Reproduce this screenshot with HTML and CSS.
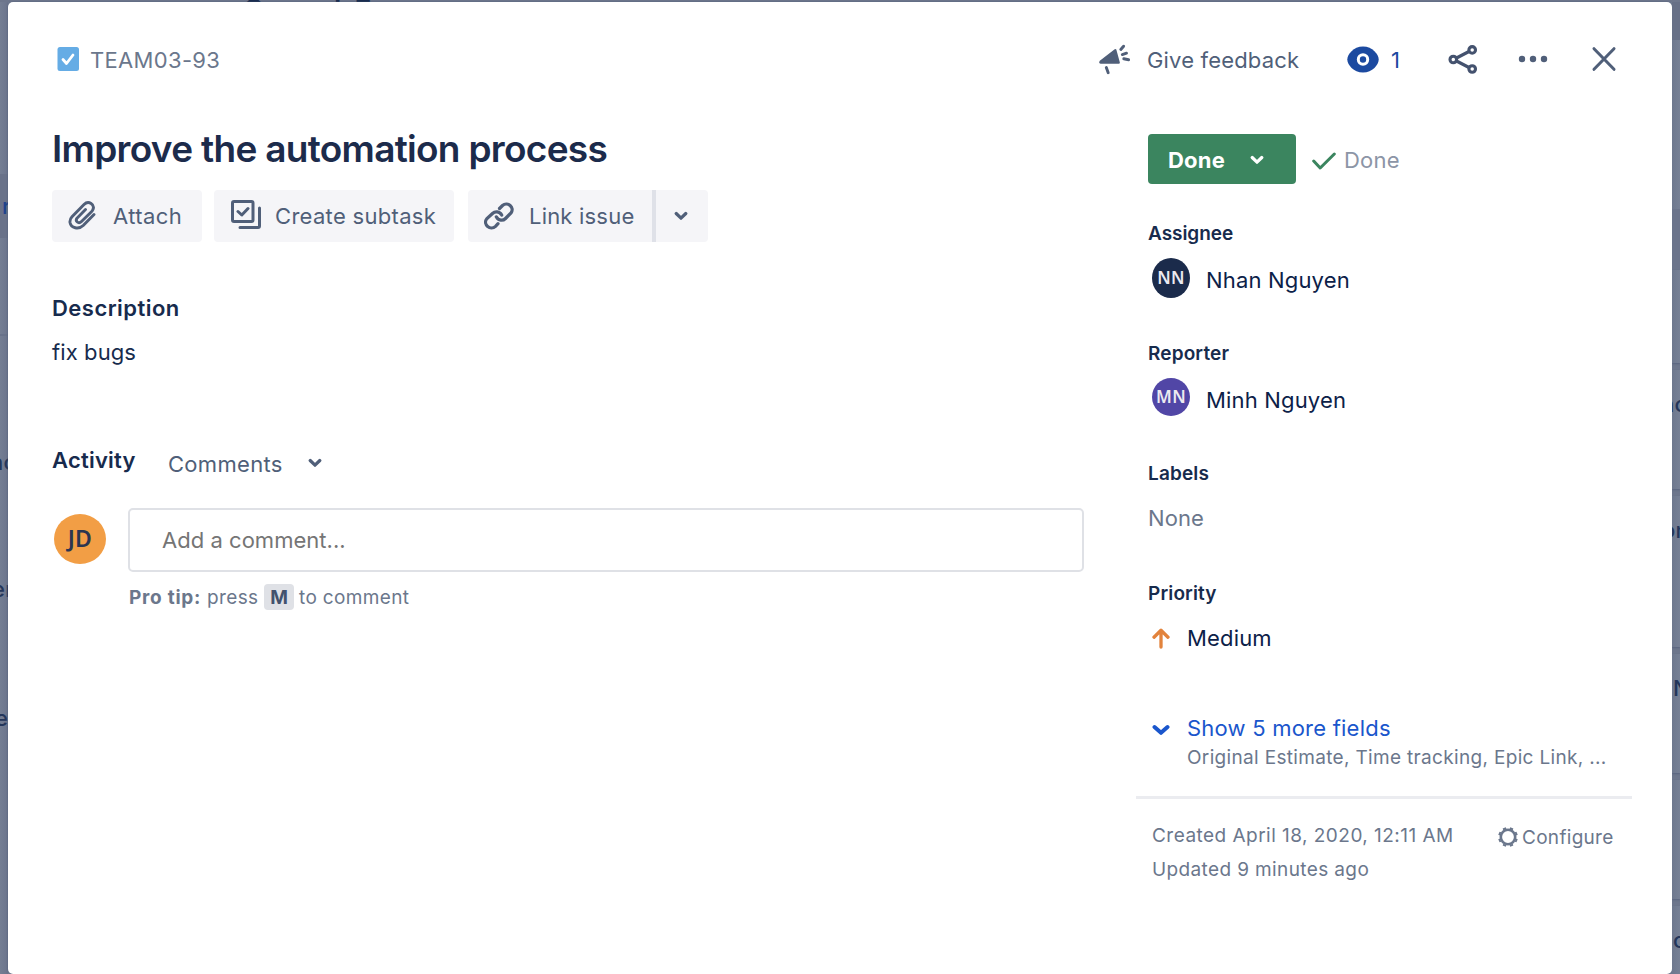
FILE: index.html
```html
<!DOCTYPE html>
<html lang="en">
<head>
<meta charset="utf-8">
<title>TEAM03-93 Improve the automation process</title>
<link rel="stylesheet" href="styles.css">
</head>
<body>
<div class="page">
  <div class="board-top"><span class="top-q">Q</span><span class="top-l">l</span><span class="top-e">E</span></div>
  <div class="board-left">
    <div class="lane lane-a"></div>
    <div class="lane lane-b"><span class="blue">r</span></div>
    <div class="lane lane-c"></div>
    <div class="lane lane-d"><span class="cut-nc">nc</span></div>
    <div class="lane lane-e"><span class="cut-er">er</span></div>
    <div class="lane lane-f"><span class="cut-e">e</span></div>
  </div>
  <main class="modal">
    <header class="topbar">
      <div class="crumb">
        <svg class="task-icon" width="22" height="24" viewBox="0 0 22 24"><rect x=".5" width="21.500" height="24" rx="2.5" fill="#65ace5"/><path d="M6 12.5l3.500 4L16 8" fill="none" stroke="#fff" stroke-width="2.800" stroke-linecap="round" stroke-linejoin="round"/></svg>
        <span class="key">TEAM03-93</span>
      </div>
      <div class="tools">
        <svg class="ic-horn" width="32" height="31" viewBox="0 0 32 31"><path d="M15.700 5.200L.8 16.800q-1.600 2.500.8 3H19.800q1.300-.2 1-1.500L17.300 5.500q-.5-1-1.600-.3z" fill="#505f79"/><g fill="none" stroke="#505f79" stroke-width="2.900" stroke-linecap="round"><path d="M7.300 23.500L9.200 28.700M21.800 5.500L24.600 2.200M23.300 10.600L27.500 9.200M24.800 14.800L29.600 15.700"/></g></svg>
        <span class="feedback">Give feedback</span>
        <svg class="ic-eye" width="32" height="27" viewBox="0 0 32 27"><path d="M16 .5C25.500.5 31.700 8.500 31.700 13.500S25.500 26.500 16 26.500.3 18.500.3 13.500 6.500.5 16 .5z" fill="#1c4aa0"/><circle cx="16" cy="13.500" r="4.700" fill="#1c4aa0" stroke="#fff" stroke-width="3"/></svg>
        <span class="watchers">1</span>
        <svg class="ic-share" width="30" height="29" viewBox="0 0 30 29"><g fill="none" stroke="#44526e" stroke-width="3.100"><circle cx="5.300" cy="14.500" r="3.300"/><circle cx="24.200" cy="4.900" r="3.300"/><circle cx="24.200" cy="24" r="3.300"/><path d="M8.500 13L21 6.500M8.500 16L21 22.500"/></g></svg>
        <svg class="ic-more" width="30" height="8" viewBox="0 0 30 8"><g fill="#505f79"><circle cx="4" cy="4" r="3.200"/><circle cx="15" cy="4" r="3.200"/><circle cx="26" cy="4" r="3.200"/></g></svg>
        <svg class="ic-close" width="26" height="26" viewBox="0 0 26 26"><path d="M3 2.700L23 23.300M23 2.700L3 23.300" stroke="#505f79" stroke-width="3" stroke-linecap="round"/></svg>
      </div>
    </header>
    <div class="content">
      <section class="main">
        <h1 class="title">Improve the automation process</h1>
        <div class="actions">
          <div class="btn btn-attach">
            <svg width="28" height="30" viewBox="0 0 28 30"><path d="M26 14.500L15.200 25.500C10.500 30 3 28 2 22.500c-.3-2.300.4-4 2-5.700L16 4.500c4.500-4.500 11.500 0 8.700 5.500-.3.700-.9 1.400-1.500 2L13.500 21.500c-3 3-6.800-.4-4.300-3.600L17.500 9.500" fill="none" stroke="#505f79" stroke-width="2.900" stroke-linecap="round" stroke-linejoin="round"/></svg>
            <span class="btn-text attach-text">Attach</span>
          </div>
          <div class="btn btn-subtask">
            <svg width="30" height="29" viewBox="0 0 30 29"><g fill="none" stroke="#505f79" stroke-width="3" stroke-linejoin="round"><rect x="1.500" y="1.500" width="20.500" height="20" rx="1.500"/><path d="M7 11.500l3.800 3.500L17 8.500M28.500 8V26a1.500 1.500 0 0 1-1.500 1.500H9" stroke-linecap="round"/></g></svg>
            <span class="btn-text">Create subtask</span>
          </div>
          <div class="btn-group">
            <div class="btn btn-link">
              <svg width="30" height="28" viewBox="0 0 30 28"><g fill="none" stroke="#505f79" stroke-width="3.200" stroke-linecap="round"><path d="M15.500 6.500l3-3c5-4.500 12.500 2 8.500 7.500l-5.500 5.500c-2.500 2.500-7 2.500-9.200-1.700"/><path d="M14 21.700l-2.500 2.600C6.500 29-1.500 22.500 2.700 16.900L8.500 11.500c2.500-2.400 7-2.400 9.200 1.500"/></g></svg>
              <span class="btn-text">Link issue</span>
            </div>
            <div class="btn-more"><svg width="14" height="10" viewBox="0 0 14 10"><path d="M2.200 2.500L7 7.200L11.800 2.500" fill="none" stroke="#505f79" stroke-width="3.200" stroke-linecap="round" stroke-linejoin="round"/></svg></div>
          </div>
        </div>
        <h2 class="heading desc-head">Description</h2>
        <p class="desc">fix bugs</p>
        <div class="activity">
          <h2 class="heading">Activity</h2>
          <span class="comments">Comments</span>
          <svg width="14" height="10" viewBox="0 0 14 10"><path d="M2.200 2.500L7 7.200L11.800 2.500" fill="none" stroke="#505f79" stroke-width="3.200" stroke-linecap="round" stroke-linejoin="round"/></svg>
        </div>
        <div class="composer">
          <div class="avatar-jd"><span>JD</span></div>
          <div class="composer-body">
            <div class="input">Add a comment...</div>
            <p class="tip"><b>Pro tip:</b><span class="press">press</span><kbd>M</kbd><span class="to">to comment</span></p>
          </div>
        </div>
      </section>
      <aside class="side">
        <div class="status">
          <div class="status-btn"><span>Done</span><svg width="14" height="10" viewBox="0 0 14 10"><path d="M2.200 2.500L7 7.200L11.800 2.500" fill="none" stroke="#fff" stroke-width="3.200" stroke-linecap="round" stroke-linejoin="round"/></svg></div>
          <svg class="check" width="24" height="18" viewBox="0 0 24 18"><path d="M1.700 9l6.500 7L22.300 2" fill="none" stroke="#3b855f" stroke-width="3" stroke-linecap="round" stroke-linejoin="round"/></svg>
          <span class="resolution">Done</span>
        </div>
        <div class="field">
          <h3 class="label assignee">Assignee</h3>
          <div class="person"><span class="avatar navy">NN</span><span class="value">Nhan Nguyen</span></div>
        </div>
        <div class="field">
          <h3 class="label">Reporter</h3>
          <div class="person"><span class="avatar purple">MN</span><span class="value">Minh Nguyen</span></div>
        </div>
        <div class="field">
          <h3 class="label">Labels</h3>
          <div class="none">None</div>
        </div>
        <div class="field">
          <h3 class="label">Priority</h3>
          <div class="priority"><svg width="18" height="21" viewBox="0 0 18 21"><path d="M9 19V2.500M2 9.200L9 2.300L16 9.200" fill="none" stroke="#e2833c" stroke-width="3.300" stroke-linecap="round" stroke-linejoin="round"/></svg><span class="value">Medium</span></div>
        </div>
        <div class="more">
          <svg width="18" height="12" viewBox="0 0 18 12"><path d="M2.500 3L9 8.800L15.500 3" fill="none" stroke="#1a56cc" stroke-width="4" stroke-linecap="round" stroke-linejoin="round"/></svg>
          <div>
            <div class="show">Show 5 more fields</div>
            <div class="summary">Original Estimate, Time tracking, Epic Link, ...</div>
          </div>
        </div>
        <div class="rule"></div>
        <footer class="meta">
          <div class="dates"><div class="created">Created April 18, 2020, 12:11 AM</div><div>Updated 9 minutes ago</div></div>
          <div class="configure">
            <svg width="20" height="20" viewBox="0 0 20 20"><circle cx="10" cy="10" r="7.200" fill="none" stroke="#6b778c" stroke-width="2.600"/><g fill="none" stroke="#6b778c" stroke-width="3.400"><path d="M6.900 2.600L6.200.9M13.100 2.600L13.800.9M17.400 6.900L19.100 6.200M17.400 13.100L19.100 13.800M13.100 17.400L13.800 19.100M6.900 17.400L6.200 19.100M2.600 13.100L.9 13.800M2.600 6.900L.9 6.200"/></g></svg>
            <span>Configure</span>
          </div>
        </footer>
      </aside>
    </div>
  </main>
  <div class="board-right">
    <div class="row r1"></div>
    <div class="row r2"></div>
    <div class="row r3"></div>
    <div class="row r4"></div>
    <div class="row r5"><span class="cut-rnc">nc</span></div>
    <div class="row r6"><span class="cut-ror">on</span></div>
    <div class="row r7"><span class="cut-rn">N</span></div>
    <div class="row r8"></div>
    <div class="row r9"><span class="cut-rc">c</span></div>
  </div>
</div>
</body>
</html>
```
FILE: styles.css
```css
* { box-sizing: border-box; }
body {
  margin: 0;
  background: #737d92;
  color: #172b4d;
  font: 400 22px/24px Inter, "Liberation Sans", sans-serif;
  letter-spacing: 0.25px;
  overflow: hidden;
}
h1, h2, h3, p { margin: 0; }
svg { display: block; flex: none; }

.page {
  display: grid;
  grid-template-columns: 8px 1664px 8px;
  grid-template-rows: 2px 972px;
  width: 1680px;
  height: 974px;
  overflow: hidden;
}

/* Dimmed board around the dialog */
.board-top {
  grid-column: 1 / 4;
  display: flex;
  align-items: flex-end;
  overflow: hidden;
  background: #6d768c;
  color: #172b4d;
  font-weight: 600;
  font-size: 28px;
}
.board-top span { flex: none; line-height: 24px; }
.top-q { margin: 0 0 -20px 243px; }
.top-l { margin: 0 0 -12px 69px; }
.top-e { margin: 0 0 -20px 13px; }
.board-left, .board-right {
  display: flex;
  flex-direction: column;
  overflow: hidden;
  white-space: nowrap;
  color: #24365a;
  font-weight: 500;
}
.board-left { background: linear-gradient(90deg, #747e93, #6b748c); }
.board-right { background: #6d768c; }
.lane span, .row span { display: block; }
.lane { flex: none; }
.lane-a { height: 172px; }
.lane-b { height: 64px; background: #697289; padding: 20px 0 0 2px; }
.blue { color: #1f438c; }
.lane-c { height: 98px; border-bottom: 2px solid #68728a; }
.lane-d { height: 128px; padding-top: 114px; }
.lane-e { height: 128px; padding-top: 113px; }
.lane-f { padding-top: 114px; }
.cut-nc { margin-left: -10px; }
.cut-er { margin-left: -8px; }
.cut-e { margin-left: -5px; }
.row {
  flex: none;
  background: linear-gradient(90deg, #6e788e, #768095);
  box-shadow: 0 1px 2px #59647e;
  margin-bottom: 7px;
}
.r1 { height: 38px; margin: 0; background: #677087; box-shadow: none; }
.r2 { height: 169px; margin: 0; box-shadow: none; }
.r3 { height: 61px; margin: 0; background: #6b748b; box-shadow: none; }
.r4 { height: 93px; }
.r5 { height: 119px; padding-top: 22px; }
.r6 { height: 151px; padding-top: 22px; }
.r7 { height: 119px; padding-top: 22px; }
.r8 { height: 119px; }
.r9 { height: 72px; padding-top: 22px; }
.cut-rnc { margin-left: -11px; }
.cut-ror { margin-left: -10px; }
.cut-rn { margin-left: 1px; }
.cut-rc { margin-left: 1px; }

/* Dialog */
.modal {
  background: #fff;
  border-radius: 5px;
  box-shadow: 0 0 2px #4a5874;
  white-space: nowrap;
}
.topbar {
  display: flex;
  justify-content: space-between;
  align-items: flex-start;
  height: 127px;
  padding: 42px 55px 0 49px;
}
.crumb { display: flex; gap: 11px; color: #6b778c; padding-top: 3px; letter-spacing: 0.33px; }
.crumb .key { padding-top: 1px; }
.tools { display: flex; align-items: center; height: 31px; color: #505f79; }
.feedback { width: 152px; margin-left: 16px; padding-top: 1px; letter-spacing: 0.17px; }
.ic-eye { margin-left: 48px; margin-top: -1px; }
.watchers { width: 9px; margin-left: 12px; padding-top: 1px; color: #1c4aa0; }
.ic-share { margin-left: 48px; }
.ic-more { margin-left: 40px; margin-top: -1px; }
.ic-close { margin-left: 43px; margin-top: -1px; }

.content { display: flex; gap: 52px; padding-left: 44px; }
.main { width: 1032px; }
.title {
  height: 61px;
  font-size: 37px;
  line-height: 40px;
  font-weight: 600;
  letter-spacing: -0.7px;
  color: #1c2b4b;
}
.actions { display: flex; height: 52px; gap: 12px; color: #505f79; }
.btn {
  display: flex;
  align-items: center;
  height: 52px;
  background: #f5f5f8;
  border-radius: 4px;
}
.btn-text { letter-spacing: 0.31px; }
.btn-attach { width: 150px; padding-left: 16px; gap: 17px; }
.btn-attach svg { margin-top: -2px; }
.attach-text { letter-spacing: 0.4px; }
.btn-subtask { width: 240px; padding-left: 17px; gap: 14px; }
.btn-subtask svg { margin-top: -3px; }
.btn-group { display: flex; margin-left: 2px; }
.btn-link { width: 184px; padding-left: 16px; gap: 15px; border-radius: 4px 0 0 4px; }
.btn-link svg { margin-top: -1px; }
.btn-link .btn-text { letter-spacing: 0.2px; }
.btn-more {
  width: 56px;
  padding: 21px 0 0 18px;
  background: #f5f5f8;
  border-left: 4px solid #dfe1e8;
  border-radius: 0 4px 4px 0;
}
.heading { font-size: 22px; line-height: 24px; font-weight: 600; letter-spacing: 0.22px; }
.desc-head { margin-top: 54px; letter-spacing: 0.47px; }
.desc { margin-top: 20px; letter-spacing: 0.1px; }
.activity { display: flex; margin-top: 84px; height: 60px; color: #505f79; }
.activity .heading { width: 116px; color: #172b4d; }
.comments { width: 140px; padding-top: 4px; letter-spacing: 0.3px; }
.activity svg { margin-top: 10px; }
.composer { display: flex; }
.avatar-jd {
  width: 52px;
  height: 50px;
  margin: 6px 22px 0 2px;
  border-radius: 50%;
  background: #f29e45;
  color: #2b3550;
  text-align: center;
  font: 600 23px/49px "Noto Sans", sans-serif;
}
.input {
  width: 956px;
  height: 64px;
  padding: 18px 0 0 32px;
  border: 2px solid #dfe1e6;
  border-radius: 5px;
  color: #757575;
  letter-spacing: 0.03px;
}
.tip {
  display: flex;
  margin: 12px 0 0;
  padding-left: 1px;
  font-size: 19px;
  line-height: 28px;
  letter-spacing: 0.36px;
  color: #6b778c;
}
.tip b { width: 78px; letter-spacing: 0.75px; font-weight: 700; }
.press { width: 57px; }
.tip kbd {
  width: 30px;
  height: 26px;
  margin-right: 5px;
  border-radius: 4px;
  background: #dfe1e6;
  color: #42526e;
  text-align: center;
  font: 700 19px/28px Inter, sans-serif;
  letter-spacing: 0;
}

.side { width: 496px; padding-top: 5px; }
.status { display: flex; height: 88px; padding-left: 12px; }
.status-btn {
  display: flex;
  width: 148px;
  height: 50px;
  padding: 14px 0 0 20px;
  border-radius: 4px;
  background: #3b855f;
  color: #fff;
  font-weight: 700;
  letter-spacing: 0.2px;
}
.status-btn span { width: 82px; }
.status-btn svg { margin-top: 7px; }
.check { margin: 18px 8px 0 16px; }
.resolution { padding-top: 14px; color: #8c95a6; letter-spacing: 0.2px; }
.field { height: 120px; padding-left: 12px; }
.label { font-size: 19px; line-height: 24px; font-weight: 600; letter-spacing: 0.14px; }
.assignee { letter-spacing: -0.05px; }
.person { display: flex; padding: 12px 0 0 4px; color: #0c2148; }
.avatar {
  width: 38px;
  height: 39px;
  margin-right: 16px;
  border-radius: 50%;
  text-align: center;
  color: #eceaf0;
  font: 600 17px/39px "Noto Sans", sans-serif;
}
.navy { height: 40px; background: #1b2b4b; }
.purple { height: 38px; background: #5146a6; line-height: 37px; }
.value { letter-spacing: 0.17px; }
.person .value { padding-top: 10px; }
.none { padding-top: 20px; color: #6b778c; letter-spacing: 0.1px; }
.priority { display: flex; gap: 17px; padding: 20px 0 0 4px; color: #0c2148; }
.priority svg { margin-top: 2px; }
.more { display: flex; gap: 17px; height: 80px; margin-top: 14px; padding-left: 16px; }
.more svg { margin-top: 8px; }
.show { letter-spacing: 0.22px; color: #1a56cc; }
.summary { margin-top: 6px; font-size: 19px; letter-spacing: 0.33px; color: #6b778c; }
.rule { height: 3px; background: #ebecf0; }
.meta { display: flex; padding: 25px 0 0 16px; font-size: 19px; letter-spacing: 0.38px; color: #6b778c; }
.dates { display: flex; flex-direction: column; gap: 10px; width: 346px; }
.created { letter-spacing: 0.47px; }
.configure { display: flex; gap: 4px; padding-top: 2px; letter-spacing: 0.3px; }
.configure svg { margin-top: 1px; }
```
